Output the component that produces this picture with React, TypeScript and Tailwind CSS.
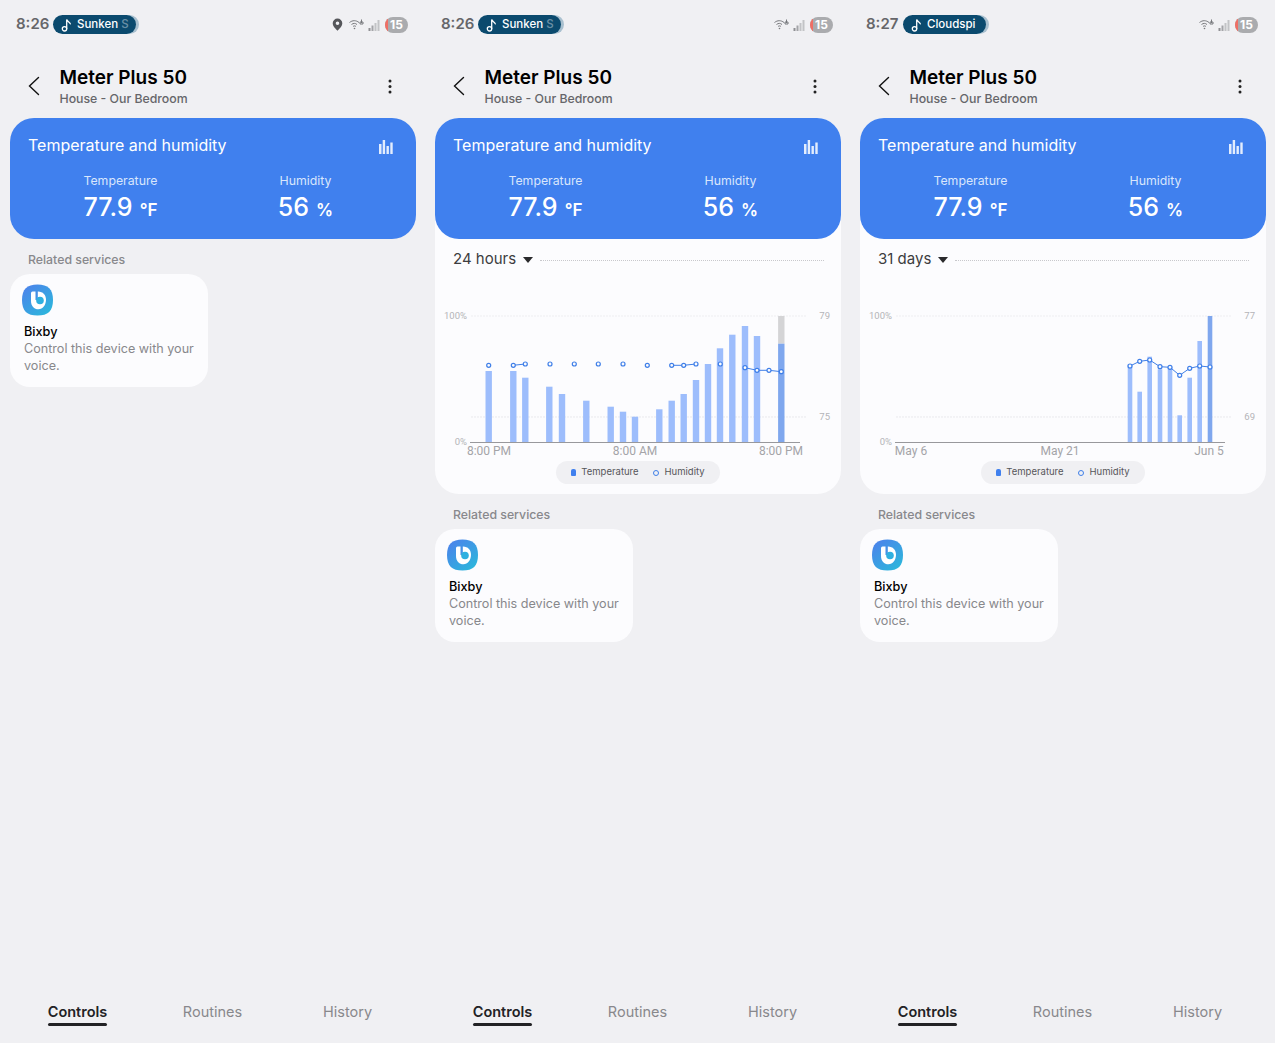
import React from 'react';

type Bar = { x: number; top: number; dark?: boolean };
type Dot = { x: number; y: number };

interface ChartData {
  range: string;
  barWidth: number;
  bars: Bar[];
  dots: Dot[];
  segments: number[][];
  right: [string, string];
  labels: { text: string; x: number }[];
  ghost?: { x: number; top: number; bottom: number };
}

const BASE = 142; // y of axis inside the svg, svg starts at 300

const day: ChartData = {
  range: '24 hours',
  barWidth: 6.4,
  bars: [
    { x: 53.7, top: 71 }, { x: 78.3, top: 71 }, { x: 90.3, top: 77.7 }, { x: 114.3, top: 86.7 },
    { x: 127, top: 94 }, { x: 151.3, top: 100.7 }, { x: 175.7, top: 106.7 }, { x: 188, top: 111.7 },
    { x: 200, top: 116.7 }, { x: 224.3, top: 109.3 }, { x: 236.7, top: 100.7 }, { x: 248.7, top: 94 },
    { x: 261, top: 80 }, { x: 273, top: 64 }, { x: 285, top: 48.3 }, { x: 297.3, top: 34.7 },
    { x: 310, top: 26 }, { x: 322, top: 36 }, { x: 346.3, top: 43.7, dark: true },
  ],
  ghost: { x: 346.3, top: 16, bottom: 43.7 },
  dots: [
    { x: 53.7, y: 65.3 }, { x: 78.3, y: 65.3 }, { x: 90.3, y: 64 }, { x: 115, y: 64 },
    { x: 139.3, y: 64 }, { x: 163.3, y: 64 }, { x: 188, y: 64 }, { x: 212.3, y: 65.3 },
    { x: 236.7, y: 65.3 }, { x: 248.7, y: 65.3 }, { x: 261, y: 64 }, { x: 285.3, y: 64 },
    { x: 310, y: 67.7 }, { x: 322, y: 70.3 }, { x: 334, y: 70.3 }, { x: 346.3, y: 71.7 },
  ],
  segments: [[1, 2], [8, 9, 10], [12, 13, 14, 15]],
  right: ['79', '75'],
  labels: [
    { text: '8:00 PM', x: 54 },
    { text: '8:00 AM', x: 200 },
    { text: '8:00 PM', x: 346 },
  ],
};

const month: ChartData = {
  range: '31 days',
  barWidth: 4.6,
  bars: [
    { x: 270, top: 64.3 }, { x: 279.7, top: 91.7 }, { x: 289.7, top: 56.7 }, { x: 300, top: 69.3 },
    { x: 310, top: 67.3 }, { x: 319.7, top: 115.3 }, { x: 329.7, top: 77.7 }, { x: 339.7, top: 41 },
    { x: 350, top: 16, dark: true },
  ],
  dots: [
    { x: 270, y: 66 }, { x: 279.7, y: 61.3 }, { x: 289.7, y: 60 }, { x: 300, y: 66.7 },
    { x: 310, y: 67.3 }, { x: 319.7, y: 75.3 }, { x: 329.7, y: 68.3 }, { x: 339.7, y: 66 },
    { x: 350, y: 67 },
  ],
  segments: [[0, 1, 2, 3, 4, 5, 6, 7, 8]],
  right: ['77', '69'],
  labels: [
    { text: 'May 6', x: 51 },
    { text: 'May 21', x: 200 },
    { text: 'Jun 5', x: 349 },
  ],
};

const StatusBar = ({ time, track, tail, pin }: { time: string; track: string; tail?: string; pin?: boolean }) => (
  <div className="flex h-12 items-center pl-4 pr-[17px] pt-[1px]">
    <span className="w-[37px] text-[15px] font-semibold text-[#66666a]">{time}</span>
    <div className="flex h-[19px] w-[83px] items-center rounded-full bg-[#0b4a6e] pl-2 shadow-[3px_0_0_#a9c0cf]">
      <svg width="12" height="14" viewBox="0 0 12 14" fill="none" stroke="white" strokeWidth="1.3">
        <circle cx="3.5" cy="10.8" r="2.2" />
        <path d="M5.7 10.8V1.5c.4 2 3 2.400 3.600 4.400" strokeLinecap="round" />
      </svg>
      <span className="ml-[4px] whitespace-nowrap text-[11.500px] font-medium text-white">
        {track}
        {tail && <span className="text-white/40">{tail}</span>}
      </span>
    </div>
    <div className="ml-auto flex items-center">
      {pin && (
        <svg className="mr-[6px]" width="11" height="13" viewBox="0 0 11 13">
          <path fillRule="evenodd" fill="#55565a" d="M5.500 0.500a4.800 4.800 0 0 1 4.800 4.800c0 3-3 5.600-4.800 7.400C3.700 10.900.7 8.300.7 5.300A4.800 4.800 0 0 1 5.500.5zm0 3a1.800 1.800 0 1 0 0 3.600 1.800 1.800 0 0 0 0-3.600z" />
        </svg>
      )}
      <svg width="15" height="11" viewBox="0 0 15 11" fill="none" stroke="#77787c" strokeWidth="1">
        <path d="M0.500 3.500c3-2.400 6.500-2.400 9.500 0M2.500 5.500c2-1.500 3.700-1.500 5.500 0M4 7.500c1-.8 2-.8 3 0" />
        <circle cx="5.500" cy="9.500" r="0.800" fill="#77787c" stroke="none" />
        <path d="M12.500 0.500v3.500M11 3h3v2h-3z" stroke="#77787c" />
      </svg>
      <svg className="ml-[4px]" width="12" height="12" viewBox="0 0 12 12" fill="#c2c3c6">
        <rect x="0.500" y="9" width="2" height="3" fill="#8f9094" />
        <rect x="3.500" y="6.500" width="2" height="5.500" fill="#a3a4a8" />
        <rect x="6.500" y="4" width="2" height="8" />
        <rect x="9.500" y="1" width="2" height="11" />
      </svg>
      <div className="relative ml-[5px] flex h-4 w-[23px] items-center justify-center overflow-hidden rounded-full bg-[#aaabae]">
        <div className="absolute inset-y-0 left-0 w-[3px] bg-[#ef6f66]" />
        <span className="text-xs font-bold leading-none text-white">15</span>
      </div>
    </div>
  </div>
);

const Header = () => (
  <div className="flex h-[70px] items-start pt-[18px]">
    <svg className="ml-[28px] mt-[10px]" width="12" height="20" viewBox="0 0 12 20" fill="none" stroke="#111" strokeWidth="1.400" strokeLinecap="round">
      <path d="M10.500 1.500L1.500 10l9 8.500" />
    </svg>
    <div className="ml-[19.500px]">
      <div className="text-[19px] font-semibold leading-[24px] text-black">Meter Plus 50</div>
      <div className="mt-[1px] text-[12.300px] font-medium leading-4 text-[#66666a]">House - Our Bedroom</div>
    </div>
    <svg className="ml-auto mr-[33px] mt-[13px]" width="4" height="15" viewBox="0 0 4 15" fill="#222">
      <circle cx="2" cy="2" r="1.500" />
      <circle cx="2" cy="7.500" r="1.500" />
      <circle cx="2" cy="13" r="1.500" />
    </svg>
  </div>
);

const Reading = ({ label, value, unit }: { label: string; value: string; unit: string }) => (
  <div className="flex flex-col items-center">
    <div className="text-[12.300px] leading-4 text-[#d9e6fc]">{label}</div>
    <div className="mt-[2px] flex items-baseline whitespace-nowrap font-medium text-white">
      <span className="text-[25px] leading-8">{value}</span>
      <span className="ml-[7px] text-[17px] font-semibold leading-8">{unit}</span>
    </div>
  </div>
);

const BlueCard = () => (
  <div className="h-[121px] rounded-3xl bg-[#4080ee] px-[18px] pt-[15px]">
    <div className="flex items-center justify-between">
      <span className="text-base leading-6 text-white">Temperature and humidity</span>
      <svg className="mr-[5px] mt-[3px]" width="14" height="14" viewBox="0 0 14 14" fill="#e3edfd">
        <rect x="0" y="4" width="2.500" height="10" />
        <rect x="3.700" y="0" width="2.400" height="14" />
        <rect x="7.500" y="6" width="2.400" height="8" />
        <rect x="11.300" y="2.500" width="2.400" height="11.500" />
      </svg>
    </div>
    <div className="mt-4 grid grid-cols-2">
      <Reading label="Temperature" value="77.9" unit="°F" />
      <Reading label="Humidity" value="56" unit="%" />
    </div>
  </div>
);

const Chart = ({ data }: { data: ChartData }) => (
  <svg className="block" width="406" height="160" viewBox="0 0 406 160" fontFamily="Roboto, sans-serif">
    <line x1="36" x2="372" y1="16" y2="16" stroke="#eeeef1" strokeDasharray="2 1" />
    <line x1="36" x2="372" y1="117" y2="117" stroke="#e9e9ed" strokeDasharray="2 1" />
    {data.ghost && (
      <rect x={data.ghost.x - 3.2} y={data.ghost.top} width={6.4} height={data.ghost.bottom - data.ghost.top} fill="#d4d4d6" />
    )}
    {data.bars.map((b) => (
      <rect key={b.x} x={b.x - data.barWidth / 2} y={b.top} width={data.barWidth} height={BASE - b.top} fill={b.dark ? '#7fa7ee' : '#9dbdfc'} />
    ))}
    <line x1="35" x2="365" y1={BASE + 0.5} y2={BASE + 0.5} stroke="#98989c" strokeWidth="1" />
    {data.segments.map((s) => (
      <polyline key={s[0]} points={s.map((i) => `${data.dots[i].x},${data.dots[i].y}`).join(' ')} fill="none" stroke="#3f7fe8" strokeWidth="1" />
    ))}
    {data.dots.map((d) => (
      <circle key={d.x} cx={d.x} cy={d.y} r="2" fill="#fcfcfe" stroke="#3f7fe8" strokeWidth="1.200" />
    ))}
    <g fontSize="9.500" fill="#b4b4b8">
      <text x="32" y="18.500" textAnchor="end">100%</text>
      <text x="32" y="144.500" textAnchor="end">0%</text>
      <text x="395" y="18.500" textAnchor="end">{data.right[0]}</text>
      <text x="395" y="119.500" textAnchor="end">{data.right[1]}</text>
    </g>
    <g fontSize="12" fill="#a4a4a8">
      {data.labels.map((l) => (
        <text key={l.text + l.x} x={l.x} y="155" textAnchor="middle">{l.text}</text>
      ))}
    </g>
  </svg>
);

const ChartCard = ({ data }: { data: ChartData }) => (
  <div className="h-[376px] rounded-3xl bg-[#fcfcfe]">
    <BlueCard />
    <div className="flex h-[41px] items-center pb-[1px] pl-[18px] pr-[17px]">
      <span className="text-[15px] text-[#3d3d40]">{data.range}</span>
      <svg className="ml-[7px] mt-[1px]" width="10" height="6" viewBox="0 0 10 6" fill="#2a2a2c">
        <path d="M0 0h10L5 6z" />
      </svg>
      <div className="ml-[7px] mt-[2px] flex-1 border-t border-dotted border-[#c8c8cc]" />
    </div>
    <div className="mt-5">
      <Chart data={data} />
    </div>
    <div className="mx-auto mt-px flex h-[23px] w-[164px] items-center justify-center rounded-full bg-[#f0f0f3] text-[9.500px] text-[#56565a]">
      <span className="mr-[5px] h-[7px] w-[5px] rounded-t-[2px] rounded-b-[1px] bg-[#4080ee]" />
      <span>Temperature</span>
      <span className="ml-[14px] mr-[6px] h-[6px] w-[6px] rounded-full border border-[#3f7fe8]" />
      <span>Humidity</span>
    </div>
  </div>
);

const BixbyIcon = ({ id }: { id: string }) => (
  <svg width="31" height="32" viewBox="0 0 31 32">
    <defs>
      <linearGradient id={id} x1="0.150" y1="0.100" x2="0.850" y2="0.950">
        <stop offset="0" stopColor="#4a86ea" />
        <stop offset="1" stopColor="#2cb6dc" />
      </linearGradient>
    </defs>
    <path fill={`url(#${id})`} d="M15.500 0.500C26 .5 31 5 31 16s-5 15.500-15.500 15.500S0 27 0 16 5 .5 15.500.5z" />
    <path fill="white" d="M9 9a1.500 1.500 0 0 1 1.500-1.500H16c5 0 8 3.500 8 8.500s-3.500 9.300-7.500 9.300C12 25.300 9 22 9 17z" />
    <rect x="13.500" y="6.500" width="2.300" height="9.500" fill="#4590e6" />
    <circle cx="18" cy="16.500" r="3.800" fill="#2fb0e0" />
  </svg>
);

const Related = ({ iconId }: { iconId: string }) => (
  <>
    <div className="mb-[4.500px] ml-[18px] mt-[10.500px] text-[12.300px] font-medium leading-5 text-[#88888c]">Related services</div>
    <div className="h-[113px] w-[198px] rounded-[20px] bg-[#fcfcfe] pl-3 pt-[10px]">
      <BixbyIcon id={iconId} />
      <div className="ml-[2px] mt-[6.500px] text-[12.700px] font-medium leading-[17px] text-black">Bixby</div>
      <div className="ml-[2px] text-[12.600px] leading-[17px] text-[#88888c]">
        Control this device with your
        <br />
        voice.
      </div>
    </div>
  </>
);

const Tabs = () => (
  <div className="mt-auto grid grid-cols-3 px-[10px] pb-[17px] text-center text-[14.500px] leading-5">
    <div className="flex justify-center">
      <div className="font-semibold text-[#222225]">
        Controls
        <div className="mt-[1px] h-[3px] rounded-full bg-[#222225]" />
      </div>
    </div>
    <div className="text-[#88888c]">Routines</div>
    <div className="text-[#88888c]">History</div>
  </div>
);

const Phone = ({ time, track, tail, pin, chart, iconId }: { time: string; track: string; tail?: string; pin?: boolean; chart?: ChartData; iconId: string }) => (
  <div className="flex h-[1043px] w-[425px] flex-col">
    <StatusBar time={time} track={track} tail={tail} pin={pin} />
    <Header />
    <div className="pl-[10px] pr-[9px]">
      {chart ? <ChartCard data={chart} /> : <BlueCard />}
      <Related iconId={iconId} />
    </div>
    <Tabs />
  </div>
);

export default function App() {
  return (
    <div className="flex min-h-[1043px] w-[1275px] bg-[#f0f0f3] font-['Inter',sans-serif]">
      <Phone time="8:26" track="Sunken " tail="S" pin iconId="bixby-a" />
      <Phone time="8:26" track="Sunken " tail="S" chart={day} iconId="bixby-b" />
      <Phone time="8:27" track="Cloudspi" chart={month} iconId="bixby-c" />
    </div>
  );
}
